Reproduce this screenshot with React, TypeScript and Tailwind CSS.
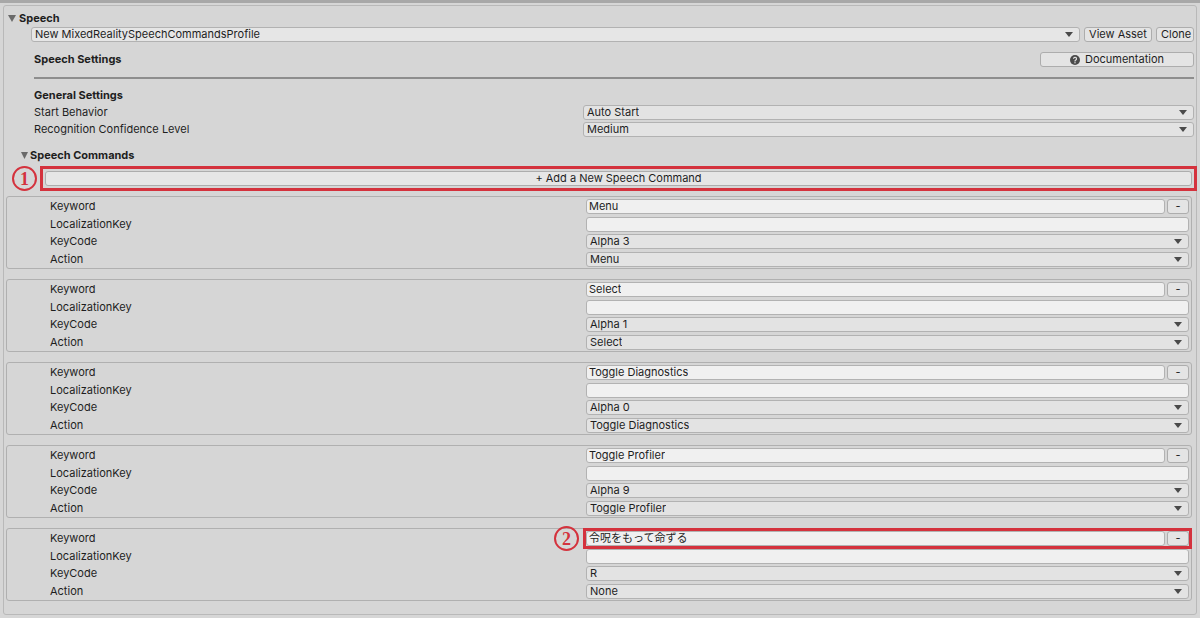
import React from "react";

const Arrow = () => (
  <svg width="8" height="5" viewBox="0 0 8 5" className="shrink-0">
    <path d="M0 0h8L4 5z" fill="#4a4a4a" />
  </svg>
);

const Dropdown = ({ value, className = "" }: { value: string; className?: string }) => (
  <div
    className={
      "h-[15px] flex items-center justify-between pl-[3px] pr-[6px] bg-[#e3e3e3] border border-[#b2b2b2] rounded-[3px] " +
      className
    }
  >
    <span className="whitespace-nowrap overflow-hidden leading-[13px]">{value}</span>
    <Arrow />
  </div>
);

const TextField = ({ value, className = "" }: { value: string; className?: string }) => (
  <div
    className={
      "h-[15px] flex items-center pl-[2px] bg-[#f0f0f0] border border-[#b2b2b2] rounded-[3px] " + className
    }
  >
    <span className="whitespace-nowrap overflow-hidden leading-[13px]">{value}</span>
  </div>
);

const Button = ({ children, className = "" }: { children: React.ReactNode; className?: string }) => (
  <div
    className={
      "h-[15px] flex items-center justify-center bg-[#e4e4e4] border border-[#adadad] rounded-[3px] whitespace-nowrap " +
      className
    }
  >
    {children}
  </div>
);

const Marker = ({ n }: { n: string }) => (
  <div className="w-[25px] h-[25px] rounded-full border-2 border-[#d4323d] flex items-center justify-center text-[#d4323d] text-[18px] font-bold font-['Liberation_Serif',serif] leading-none">
    {n}
  </div>
);

type Cmd = { keyword: string; keyCode: string; action: string; marked?: boolean };

const commands: Cmd[] = [
  { keyword: "Menu", keyCode: "Alpha 3", action: "Menu" },
  { keyword: "Select", keyCode: "Alpha 1", action: "Select" },
  { keyword: "Toggle Diagnostics", keyCode: "Alpha 0", action: "Toggle Diagnostics" },
  { keyword: "Toggle Profiler", keyCode: "Alpha 9", action: "Toggle Profiler" },
  { keyword: "令呪をもって命ずる", keyCode: "R", action: "None", marked: true },
];

const Row = ({ label, children }: { label: string; children: React.ReactNode }) => (
  <div className="flex items-center h-[15px]">
    <div className="w-[579px] pl-[43px] shrink-0">{label}</div>
    <div className="flex-1 min-w-0">{children}</div>
  </div>
);

const CommandBlock = ({ cmd }: { cmd: Cmd }) => (
  <div className="ml-[2px] mr-[4px] h-[73px] border border-[#b0b0b0] rounded-[3px] pt-[2px] pr-[2px] flex flex-col gap-[2.6px]">
    <Row label="Keyword">
      <div className="relative flex gap-[2px]">
        <TextField value={cmd.keyword} className="flex-1" />
        <Button className="w-[22px]">-</Button>
        {cmd.marked && (
          <>
            <div className="absolute -left-[3px] -right-[3px] -top-[3px] -bottom-[3px] border-[3px] border-[#d4323d] pointer-events-none" />
            <div className="absolute -left-[32px] -top-[5px]">
              <Marker n="2" />
            </div>
          </>
        )}
      </div>
    </Row>
    <Row label="LocalizationKey">
      <TextField value="" />
    </Row>
    <Row label="KeyCode">
      <Dropdown value={cmd.keyCode} />
    </Row>
    <Row label="Action">
      <Dropdown value={cmd.action} />
    </Row>
  </div>
);

export default function App() {
  return (
    <div className="w-[1200px] h-[618px] bg-[#d6d6d6] overflow-hidden text-[11px] text-[#1e1e1e] font-['Inter','Noto_Sans_CJK_JP',sans-serif]">
      <div className="h-[3px] bg-[#a8a8a8]" />
      <div className="mx-[3px] mt-[2px] h-[610px] border border-[#b9b9b9] rounded-[3px] bg-[#d6d6d6]">
        {/* Speech header */}
        <div className="h-[14px] mt-[5px] flex items-center pl-[4px] gap-[3px] font-bold">
          <svg width="8" height="7" viewBox="0 0 8 7">
            <path d="M0 0h8L4 7z" fill="#6a6a6a" />
          </svg>
          <span>Speech</span>
        </div>

        {/* Profile */}
        <div className="mt-[2px] ml-[27px] mr-[2px] flex gap-[4px]">
          <Dropdown value="New MixedRealitySpeechCommandsProfile" className="flex-1 bg-[#e6e6e6]" />
          <Button className="w-[68px]">View Asset</Button>
          <Button className="w-[38px] justify-start pl-[4px] overflow-hidden">Clone</Button>
        </div>

        {/* Speech Settings */}
        <div className="mt-[10px] ml-[30px] mr-[2px] h-[15px] flex items-center justify-between">
          <span className="font-bold">Speech Settings</span>
          <Button className="w-[154px] gap-[5px]">
            <svg width="10" height="10" viewBox="0 0 10 10">
              <circle cx="5" cy="5" r="5" fill="#4a4a4a" />
              <path
                d="M3.5 3.8a1.5 1.5 0 1 1 2.2 1.3c-.5.3-.7.5-.7 1v.3"
                stroke="#e4e4e4"
                strokeWidth="1.2"
                fill="none"
              />
              <circle cx="5" cy="7.8" r=".7" fill="#e4e4e4" />
            </svg>
            <span>Documentation</span>
          </Button>
        </div>

        <div className="mt-[10px] ml-[30px] mr-[2px] h-[2px] bg-[#8e8e8e]" />

        {/* General Settings */}
        <div className="mt-[9px] ml-[30px] h-[14px] flex items-center font-bold">General Settings</div>
        <div className="mt-[3px] ml-[30px] mr-[2px] flex flex-col gap-[2px]">
          <div className="flex items-center h-[15px]">
            <div className="w-[549px] shrink-0">Start Behavior</div>
            <Dropdown value="Auto Start" className="flex-1" />
          </div>
          <div className="flex items-center h-[15px]">
            <div className="w-[549px] shrink-0">Recognition Confidence Level</div>
            <Dropdown value="Medium" className="flex-1" />
          </div>
        </div>

        {/* Speech Commands */}
        <div className="mt-[11px] ml-[17px] h-[14px] flex items-center gap-[2px] font-bold">
          <svg width="7" height="7" viewBox="0 0 7 7">
            <path d="M0 0h7L3.5 7z" fill="#6a6a6a" />
          </svg>
          <span>Speech Commands</span>
        </div>

        <div className="relative mt-[4px] ml-[36px] -mr-[1px] h-[25px] border-[3px] border-[#d4323d] p-[2px]">
          <Button className="h-[15px] bg-[#e6e6e6]">+ Add a New Speech Command</Button>
          <div className="absolute -left-[31px] -top-[3px]">
            <Marker n="1" />
          </div>
        </div>

        <div className="mt-[5px] flex flex-col gap-[10px]">
          {commands.map((c, i) => (
            <CommandBlock key={i} cmd={c} />
          ))}
        </div>
      </div>
    </div>
  );
}
